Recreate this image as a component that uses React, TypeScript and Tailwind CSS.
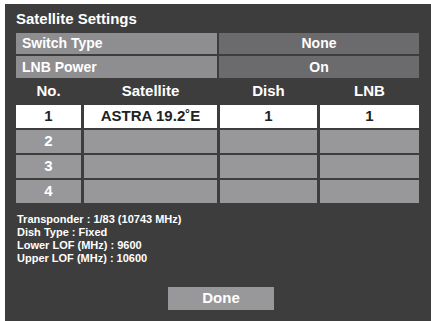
import React from "react";

const cols = "grid grid-cols-[65px_133px_97px_99px] gap-x-[3px]";

export default function App() {
  const rows = [
    { no: "1", sat: "ASTRA 19.2˚E", dish: "1", lnb: "1", active: true },
    { no: "2", sat: "", dish: "", lnb: "", active: false },
    { no: "3", sat: "", dish: "", lnb: "", active: false },
    { no: "4", sat: "", dish: "", lnb: "", active: false },
  ];
  return (
    <div
      className="w-[431px] h-[321px] bg-white pl-[5px] pt-[4px] overflow-hidden"
      style={{ fontFamily: '"Liberation Sans", Arial, sans-serif' }}
    >
      <div className="w-[426px] h-[317px] bg-[#3d3d3d] pl-[11px] pt-[5px] flex flex-col font-bold">
        <div className="text-white text-[15px] leading-[20px] h-[20px] mb-[4px]">Satellite Settings</div>
        <div className="flex gap-x-[2px] h-[21px] mb-[2px] text-[14px] text-white">
          <div className="w-[201px] bg-[#8e8e91] pl-[6px] flex items-center">Switch Type</div>
          <div className="w-[200px] bg-[#6b6b6e] flex items-center justify-center">None</div>
        </div>
        <div className="flex gap-x-[2px] h-[22px] text-[14px] text-white">
          <div className="w-[201px] bg-[#8e8e91] pl-[6px] flex items-center">LNB Power</div>
          <div className="w-[200px] bg-[#6b6b6e] flex items-center justify-center">On</div>
        </div>
        <div className={`${cols} h-[26px] mb-[1px] text-white text-[15px] items-center text-center`}>
          <div>No.</div>
          <div>Satellite</div>
          <div>Dish</div>
          <div>LNB</div>
        </div>
        <div className="flex flex-col gap-y-[2px]">
          {rows.map((r) => (
            <div key={r.no} className={`${cols} h-[23px] text-[15px] text-center`}>
              {[r.no, r.sat, r.dish, r.lnb].map((c, i) => (
                <div
                  key={i}
                  className={`flex items-center justify-center ${
                    r.active ? "bg-white text-[#222222]" : "bg-[#98989b] text-white"
                  }`}
                >
                  {c}
                </div>
              ))}
            </div>
          ))}
        </div>
        <div className="mt-[10px] text-white text-[11px] leading-[13px] pl-[1px]">
          <div>Transponder : 1/83 (10743 MHz)</div>
          <div>Dish Type : Fixed</div>
          <div>Lower LOF (MHz) : 9600</div>
          <div>Upper LOF (MHz) : 10600</div>
        </div>
        <div className="mt-[22px] ml-[152px] w-[106px] h-[23px] bg-[#98989b] text-white text-[15px] flex items-center justify-center">
          Done
        </div>
      </div>
    </div>
  );
}
